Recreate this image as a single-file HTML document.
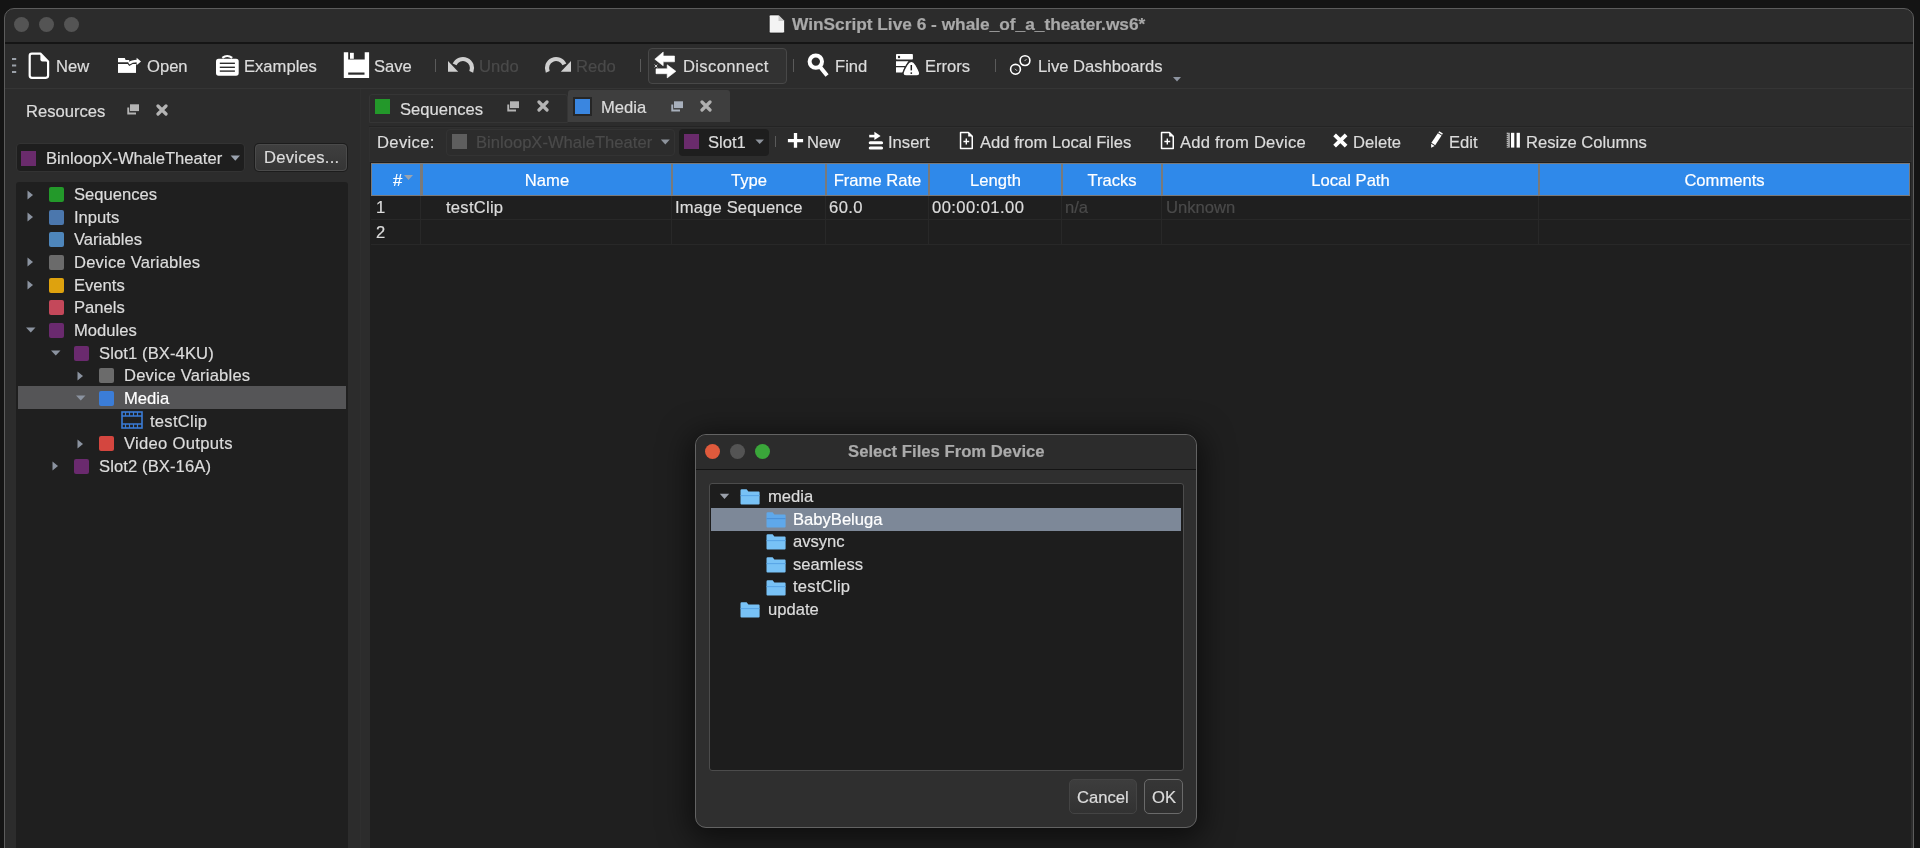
<!DOCTYPE html>
<html><head><meta charset="utf-8">
<style>
*{margin:0;padding:0;box-sizing:border-box}
html,body{width:1920px;height:848px;overflow:hidden;background:#141414;font-family:"Liberation Sans",sans-serif;font-size:16.6px;color:#dcdcdc}
.a{position:absolute}
.t{position:absolute;white-space:nowrap;line-height:20px;will-change:transform;-webkit-text-stroke:0.2px currentColor}
#win{left:4px;top:8px;width:1910px;height:900px;border:1px solid #5c5c5c;border-radius:10px;background:#2c2c2c;overflow:hidden}
.tl{position:absolute;width:15px;height:15px;border-radius:50%;background:#545454}
.sep{position:absolute;width:1px;background:#5a5a5a}
.dim{color:#4a4a4a}
.sq{position:absolute;width:15px;height:15px}
.hdr{position:absolute;top:164px;height:31px;background:#2f8ae9}
.hs{position:absolute;top:164px;width:2px;height:31px;background:#8a8a8a}
.ht{position:absolute;top:170px;line-height:20px;color:#fff;white-space:nowrap;text-align:center}
.vg{position:absolute;width:1px;background:#2a2a2a}
</style></head><body>
<div id="win" class="a"></div>
<!-- title bar -->
<div class="a" style="left:5px;top:42px;width:1908px;height:2px;background:#151515"></div>
<div class="tl" style="left:14px;top:17px"></div>
<div class="tl" style="left:39px;top:17px"></div>
<div class="tl" style="left:64px;top:17px"></div>
<svg class="a" style="left:768px;top:14px" width="18" height="20"><path d="M2.6 1H10.5L16.5 7V17.6Q16.5 18.9 15.2 18.9H2.6Q1.3 18.9 1.3 17.6V2.3Q1.3 1 2.6 1Z" fill="#f3f3f3" stroke="#141414" stroke-width="0.6"/><path d="M10.5 1V7H16.5Z" fill="#c9c9c9"/></svg>
<div class="t" style="left:792px;top:14px;font-weight:bold;font-size:17.3px;color:#a9a9a9">WinScript Live 6 - whale_of_a_theater.ws6*</div>

<!-- toolbar -->
<div class="a" style="left:5px;top:88px;width:1908px;height:1px;background:#353535"></div>
<div class="t" style="left:56px;top:57px">New</div>
<div class="t" style="left:147px;top:57px">Open</div>
<div class="t" style="left:244px;top:57px">Examples</div>
<div class="t" style="left:374px;top:57px">Save</div>
<div class="sep" style="left:435px;top:59px;height:13px"></div>
<div class="t dim" style="left:479px;top:57px">Undo</div>
<div class="t dim" style="left:576px;top:57px">Redo</div>
<div class="sep" style="left:640px;top:59px;height:13px"></div>
<div class="a" style="left:648px;top:48px;width:139px;height:36px;border:1px solid #484848;border-radius:4px;background:#323232"></div>
<div class="t" style="left:683px;top:57px;letter-spacing:0.35px">Disconnect</div>
<div class="sep" style="left:793px;top:59px;height:13px"></div>
<div class="t" style="left:835px;top:57px">Find</div>
<div class="t" style="left:925px;top:57px">Errors</div>
<div class="sep" style="left:995px;top:59px;height:13px"></div>
<div class="t" style="left:1038px;top:57px">Live Dashboards</div>

<!-- toolbar icons -->
<svg class="a" style="left:11px;top:57px" width="6" height="17"><rect x="1" y="1" width="4.2" height="2" fill="#9aa0a8"/><rect x="1" y="7.5" width="4.2" height="2" fill="#9aa0a8"/><rect x="1" y="14" width="4.2" height="2" fill="#9aa0a8"/></svg>
<svg class="a" style="left:28px;top:52px" width="22" height="27"><path d="M3.9 1.6H12.4L20.1 9.4V23.6Q20.1 25.8 17.9 25.8H3.9Q1.7 25.8 1.7 23.6V3.8Q1.7 1.6 3.9 1.6Z" fill="none" stroke="#fff" stroke-width="2.2" stroke-linejoin="round"/><path d="M12.4 1.6V7.6Q12.4 9.6 14.4 9.6H20.1Z" fill="#fff"/></svg>
<svg class="a" style="left:112px;top:48px" width="34" height="34"><path d="M6 10H12.8L13.6 12H17.2V14.2H6Z" fill="#fff"/><rect x="6" y="16" width="18" height="8.9" fill="#fff"/><path d="M16.2 16.6Q19.6 13.8 25.2 13.8" fill="none" stroke="#2c2c2c" stroke-width="3.4"/><path d="M16.8 15.4Q19.8 13 25.2 13" fill="none" stroke="#fff" stroke-width="2.5"/><path d="M24.6 9.8L29 13.5L24.6 17.2Z" fill="#fff"/></svg>
<svg class="a" style="left:210px;top:48px" width="34" height="34"><path d="M12.3 9.8Q17.2 6.2 22.2 9.8" fill="none" stroke="#fff" stroke-width="2.2"/><rect x="6" y="10.8" width="22.7" height="16.9" rx="2.6" fill="#fff"/><rect x="9.8" y="14.6" width="15.1" height="1.4" fill="#2c2c2c"/><rect x="9.8" y="18.6" width="15.1" height="1.4" fill="#2c2c2c"/><rect x="9.8" y="22.4" width="15.1" height="1.4" fill="#2c2c2c"/></svg>
<svg class="a" style="left:338px;top:48px" width="34" height="34"><path d="M5.8 4.2H10.2V11.6H26.7V4.2H31.1V29.9H5.8Z" fill="#fff"/><rect x="12" y="4.8" width="3.8" height="6" fill="#fff"/><rect x="10.2" y="24.5" width="16.3" height="2.2" fill="#2c2c2c"/></svg>
<svg class="a" style="left:444px;top:50px" width="34" height="30"><path d="M10.6 14.45A9.1 9.1 0 0 1 27.25 21.8" fill="none" stroke="#cfcfcf" stroke-width="4.2"/><path d="M4 11.1V21.8H14.2Z" fill="#cfcfcf"/></svg>
<svg class="a" style="left:541px;top:50px" width="34" height="30"><g transform="translate(34 0) scale(-1 1)"><path d="M10.6 14.45A9.1 9.1 0 0 1 27.25 21.8" fill="none" stroke="#cfcfcf" stroke-width="4.2"/><path d="M4 11.1V21.8H14.2Z" fill="#cfcfcf"/></g></svg>
<svg class="a" style="left:650px;top:48px" width="34" height="34"><path d="M4.8 11.2L13.2 4V8H24.5V13.8H13.2V17.8Z" fill="#fff" stroke="#fff" stroke-width="0.6" stroke-linejoin="round"/><path d="M25.9 23.3L17.2 16.8V20.8H6V25.7H17.2V29.9Z" fill="#fff" stroke="#fff" stroke-width="0.6" stroke-linejoin="round"/><path d="M4.6 16.6L7.4 19.4M7.4 16.6L4.6 19.4" stroke="#ddd" stroke-width="0.9"/></svg>
<svg class="a" style="left:802px;top:48px" width="34" height="34"><circle cx="13.8" cy="13.6" r="6.2" fill="none" stroke="#fff" stroke-width="4"/><path d="M18.6 19.6L23.8 26" stroke="#fff" stroke-width="4" stroke-linecap="square"/></svg>
<svg class="a" style="left:890px;top:48px" width="34" height="34"><rect x="6" y="6" width="16.9" height="5.6" rx="0.8" fill="#fff"/><circle cx="9" cy="9" r="1.2" fill="#2c2c2c"/><path d="M6 13.2H18.5L15.6 18H6Z" fill="#fff"/><path d="M6 19.2H14.6L12.5 24.5H6Z" fill="#fff"/><path d="M21.4 13.2C23.4 13.2 24.6 14.6 26 17C28.2 20.8 29.8 23.6 29.8 25.4C29.8 27.2 28.4 28 26.4 28H16.4C14.4 28 13 27.2 13 25.4C13 23.6 14.6 20.8 16.8 17C18.2 14.6 19.4 13.2 21.4 13.2Z" fill="#fff" stroke="#2c2c2c" stroke-width="1.4"/><path d="M21.3 17V22.4" stroke="#1a1a1a" stroke-width="1.5"/><circle cx="21.3" cy="25.1" r="0.9" fill="#1a1a1a"/></svg>
<svg class="a" style="left:1004px;top:50px" width="32" height="30"><circle cx="11.5" cy="19.3" r="4.9" fill="none" stroke="#fff" stroke-width="1.6"/><circle cx="21" cy="10.6" r="4.9" fill="none" stroke="#fff" stroke-width="1.6"/><path d="M11 18.8L13 20.8M20.5 11.1L22.5 9.1" stroke="#cfcfcf" stroke-width="1"/></svg>
<svg class="a" style="left:1173px;top:77px" width="9" height="5"><path d="M0 0H8L4 4.5Z" fill="#8d94a0"/></svg>

<!-- dock -->
<div class="t" style="left:26px;top:102px">Resources</div>
<svg class="a" style="left:127px;top:104px" width="13" height="11"><rect x="3" y="0.3" width="9" height="6.8" fill="#b4b4b4"/><path d="M0.3 3.5H2.2V8.6H9V10.6H0.3Z" fill="#b4b4b4"/></svg>
<svg class="a" style="left:156px;top:104px" width="12" height="12"><path d="M2 2L10 10M10 2L2 10" stroke="#b4b4b4" stroke-width="3.2" stroke-linecap="round"/></svg>
<div class="a" style="left:16px;top:143px;width:229px;height:29px;border-radius:4px;background:#1e1e1e;border:1px solid #333"></div>
<div class="sq" style="left:21px;top:151px;background:#6a2b6c"></div>
<div class="t" style="left:46px;top:149px">BinloopX-WhaleTheater</div>
<svg class="a" style="left:225px;top:155px" width="16" height="7"><path d="M5.6 0.6H15L10.3 5.8Z" fill="#9aa2ae"/></svg>
<div class="a" style="left:255px;top:144px;width:92px;height:27px;border-radius:4px;background:linear-gradient(#3f3f3f,#353535);border:1px solid #4a4a4a;box-shadow:0 0 0 1px #1c1c1c"></div>
<div class="t" style="left:264px;top:148px;letter-spacing:0.25px">Devices...</div>
<div class="a" style="left:16px;top:182px;width:332px;height:700px;background:#1f1f1f;border-radius:3px"></div>
<svg class="a" style="left:27px;top:190px" width="7" height="10"><path d="M0.5 0.5L6 5L0.5 9.5Z" fill="#8b93a0"/></svg>
<div class="sq" style="left:49px;top:187px;background:#23992a;border-radius:2px"></div>
<div class="t" style="left:74px;top:185px">Sequences</div>
<svg class="a" style="left:27px;top:212px" width="7" height="10"><path d="M0.5 0.5L6 5L0.5 9.5Z" fill="#8b93a0"/></svg>
<div class="sq" style="left:49px;top:210px;background:#4b77ad;border-radius:2px"></div>
<div class="t" style="left:74px;top:208px">Inputs</div>
<div class="sq" style="left:49px;top:232px;background:#4e86bb;border-radius:2px"></div>
<div class="t" style="left:74px;top:230px">Variables</div>
<svg class="a" style="left:27px;top:257px" width="7" height="10"><path d="M0.5 0.5L6 5L0.5 9.5Z" fill="#8b93a0"/></svg>
<div class="sq" style="left:49px;top:255px;background:#6b6b6b;border-radius:2px"></div>
<div class="t" style="left:74px;top:253px;letter-spacing:0.19px">Device Variables</div>
<svg class="a" style="left:27px;top:280px" width="7" height="10"><path d="M0.5 0.5L6 5L0.5 9.5Z" fill="#8b93a0"/></svg>
<div class="sq" style="left:49px;top:278px;background:#dea20e;border-radius:2px"></div>
<div class="t" style="left:74px;top:276px">Events</div>
<div class="sq" style="left:49px;top:300px;background:#c4485a;border-radius:2px"></div>
<div class="t" style="left:74px;top:298px">Panels</div>
<svg class="a" style="left:26px;top:327px" width="10" height="6"><path d="M0 0.5L9.5 0.5L4.75 5.5Z" fill="#8b93a0"/></svg>
<div class="sq" style="left:49px;top:323px;background:#6a2a6e;border-radius:2px"></div>
<div class="t" style="left:74px;top:321px">Modules</div>
<svg class="a" style="left:51px;top:350px" width="10" height="6"><path d="M0 0.5L9.5 0.5L4.75 5.5Z" fill="#8b93a0"/></svg>
<div class="sq" style="left:74px;top:346px;background:#6a2a6e;border-radius:2px"></div>
<div class="t" style="left:99px;top:344px;letter-spacing:0.1px">Slot1 (BX-4KU)</div>
<svg class="a" style="left:77px;top:371px" width="7" height="10"><path d="M0.5 0.5L6 5L0.5 9.5Z" fill="#8b93a0"/></svg>
<div class="sq" style="left:99px;top:368px;background:#6b6b6b;border-radius:2px"></div>
<div class="t" style="left:124px;top:366px;letter-spacing:0.19px">Device Variables</div>
<div class="a" style="left:18px;top:386px;width:328px;height:23px;background:#555557"></div>
<svg class="a" style="left:76px;top:395px" width="10" height="6"><path d="M0 0.5L9.5 0.5L4.75 5.5Z" fill="#8b93a0"/></svg>
<div class="sq" style="left:99px;top:391px;background:#3b7dd8;border-radius:2px"></div>
<div class="t" style="left:124px;top:389px;color:#fff">Media</div>
<svg class="a" style="left:121px;top:411px" width="22" height="18"><rect x="1" y="1" width="20" height="16" fill="none" stroke="#3a7bd5" stroke-width="1.6"/><path d="M1 5H21M1 13H21" stroke="#3a7bd5" stroke-width="1.4"/><path d="M4.5 1V5M8.5 1V5M12.5 1V5M16.5 1V5M4.5 13V17M8.5 13V17M12.5 13V17M16.5 13V17" stroke="#3a7bd5" stroke-width="1.2"/></svg>
<div class="t" style="left:150px;top:412px;letter-spacing:0.25px">testClip</div>
<svg class="a" style="left:77px;top:439px" width="7" height="10"><path d="M0.5 0.5L6 5L0.5 9.5Z" fill="#8b93a0"/></svg>
<div class="sq" style="left:99px;top:436px;background:#d4463f;border-radius:2px"></div>
<div class="t" style="left:124px;top:434px;letter-spacing:0.3px">Video Outputs</div>
<svg class="a" style="left:52px;top:461px" width="7" height="10"><path d="M0.5 0.5L6 5L0.5 9.5Z" fill="#8b93a0"/></svg>
<div class="sq" style="left:74px;top:459px;background:#6a2a6e;border-radius:2px"></div>
<div class="t" style="left:99px;top:457px;letter-spacing:0.1px">Slot2 (BX-16A)</div>

<div class="a" style="left:360px;top:89px;width:1px;height:760px;background:#2f2f2f"></div>
<!-- tabs -->
<div class="a" style="left:369px;top:94px;width:199px;height:29px;border:1px solid #353535;border-radius:3px 3px 0 0"></div>
<div class="sq" style="left:375px;top:99px;background:#23982a"></div>
<div class="t" style="left:400px;top:100px">Sequences</div>
<svg class="a" style="left:507px;top:101px" width="13" height="11"><rect x="3" y="0.3" width="9" height="6.8" fill="#b4b4b4"/><path d="M0.3 3.5H2.2V8.6H9V10.6H0.3Z" fill="#b4b4b4"/></svg>
<svg class="a" style="left:537px;top:100px" width="12" height="12"><path d="M2 2L10 10M10 2L2 10" stroke="#b4b4b4" stroke-width="3.2" stroke-linecap="round"/></svg>
<div class="a" style="left:568px;top:90px;width:162px;height:32px;background:#3e3e3e;border-radius:3px 3px 0 0"></div>
<div class="a" style="left:573px;top:97px;width:19px;height:19px;background:#262626"></div>
<div class="sq" style="left:575px;top:99px;background:#3a86e0"></div>
<div class="t" style="left:601px;top:98px">Media</div>
<svg class="a" style="left:671px;top:101px" width="13" height="11"><rect x="3" y="0.3" width="9" height="6.8" fill="#a8b0bc"/><path d="M0.3 3.5H2.2V8.6H9V10.6H0.3Z" fill="#a8b0bc"/></svg>
<svg class="a" style="left:700px;top:100px" width="12" height="12"><path d="M2 2L10 10M10 2L2 10" stroke="#b0b0b0" stroke-width="3.2" stroke-linecap="round"/></svg>
<div class="a" style="left:5px;top:126px;width:1908px;height:1px;background:#242424;clip-path:inset(0 0 0 364px)"></div>
<!-- device toolbar -->
<div class="a" style="left:369px;top:127px;width:1543px;height:35px;border:1px solid #303030;background:#2c2c2c"></div>
<div class="t" style="left:377px;top:133px;letter-spacing:0.35px">Device:</div>
<div class="a" style="left:446px;top:129px;width:229px;height:27px;border-radius:4px;border:1px solid #333"></div>
<div class="sq" style="left:452px;top:134px;background:#5e5e5e"></div>
<div class="t dim" style="left:476px;top:133px">BinloopX-WhaleTheater</div>
<div class="a" style="left:679px;top:129px;width:90px;height:27px;border-radius:4px;background:#1e1e1e"></div>
<div class="sq" style="left:684px;top:134px;background:#6a2b6c"></div>
<div class="t" style="left:708px;top:133px">Slot1</div>
<div class="sep" style="left:775px;top:136px;height:11px"></div>
<div class="t" style="left:807px;top:133px">New</div>
<div class="t" style="left:888px;top:133px">Insert</div>
<div class="t" style="left:980px;top:133px">Add from Local Files</div>
<div class="t" style="left:1180px;top:133px;letter-spacing:0.22px">Add from Device</div>
<div class="t" style="left:1353px;top:133px">Delete</div>
<div class="t" style="left:1449px;top:133px">Edit</div>
<div class="t" style="left:1526px;top:133px">Resize Columns</div>

<svg class="a" style="left:660px;top:139px" width="11" height="6"><path d="M0.8 0.6H9.8L5.3 5.4Z" fill="#8d939c"/></svg>
<svg class="a" style="left:755px;top:139px" width="10" height="6"><path d="M0.4 0.4H9L4.7 5Z" fill="#8d939c"/></svg>
<svg class="a" style="left:782px;top:128px" width="24" height="24"><path d="M5.9 12.55H21.1M13.5 5V19.7" stroke="#fff" stroke-width="3.3"/></svg>
<svg class="a" style="left:866px;top:128px" width="20" height="24"><path d="M3.2 9.4H9.8V6.8H3.2Z" fill="#fff"/><path d="M8.4 3.7L14.6 7.9L8.4 12.1Z" fill="#fff"/><path d="M4.3 14.75H15.5M4.3 20H15.5" stroke="#fff" stroke-width="3.2" stroke-linecap="round"/></svg>
<svg class="a" style="left:954px;top:128px" width="26" height="26"><path d="M6.55 4.55H14.4L18.25 8.4V20.45H6.55Z" fill="none" stroke="#fff" stroke-width="1.5" stroke-linejoin="round"/><path d="M14.2 4.6L18.2 8.6H14.2Z" fill="#fff"/><path d="M12.3 10.6V16.4M9.4 13.5H15.2" stroke="#fff" stroke-width="1.4"/></svg>
<svg class="a" style="left:1155px;top:128px" width="26" height="26"><path d="M6.55 4.55H14.4L18.25 8.4V20.45H6.55Z" fill="none" stroke="#fff" stroke-width="1.5" stroke-linejoin="round"/><path d="M14.2 4.6L18.2 8.6H14.2Z" fill="#fff"/><path d="M12.3 10.6V16.4M9.4 13.5H15.2" stroke="#fff" stroke-width="1.4"/></svg>
<svg class="a" style="left:1326px;top:128px" width="26" height="26"><path d="M8.6 6.9L20.1 18.1M20.1 6.9L8.6 18.1" stroke="#fff" stroke-width="3.9"/></svg>
<svg class="a" style="left:1426px;top:128px" width="20" height="24"><path d="M11.8 5.2L15.6 7.6L9.2 17.2L5.4 14.8Z" fill="#fff"/><path d="M12.4 4.4L13.2 3.2L16.9 5.6L16.1 6.8Z" fill="#fff"/><path d="M5.1 15.8L8.6 18L5.2 19.8Z" fill="#fff"/></svg>
<svg class="a" style="left:1504px;top:128px" width="20" height="24"><path d="M3.5 4.8V19.6" stroke="#e6e6e6" stroke-width="1.6" stroke-dasharray="1 1"/><path d="M5 4.8V19.6" stroke="#fff" stroke-width="1"/><rect x="7" y="4.8" width="3.3" height="14.8" fill="#fff"/><rect x="12.6" y="4.8" width="3.3" height="14.8" fill="#fff"/></svg>
<!-- table -->
<div class="a" style="left:370px;top:162px;width:1541px;height:700px;background:#1f1f1f"></div>
<div class="a" style="left:371px;top:163px;width:1539px;height:33px;background:#7a7a7a"></div>
<div class="a" style="left:372px;top:164px;width:48px;height:31px;background:#2f89ea"></div>
<div class="t" style="left:393px;top:171px;color:#fff">#</div>
<svg class="a" style="left:404px;top:175px" width="9" height="5"><path d="M0 0H9L4.5 5Z" fill="#9aa4b0"/></svg>
<div class="a" style="left:423px;top:164px;width:248px;height:31px;background:#2f89ea"></div>
<div class="t" style="left:423px;top:171px;width:248px;text-align:center;color:#fff">Name</div>
<div class="a" style="left:673px;top:164px;width:152px;height:31px;background:#2f89ea"></div>
<div class="t" style="left:673px;top:171px;width:152px;text-align:center;color:#fff">Type</div>
<div class="a" style="left:827px;top:164px;width:101px;height:31px;background:#2f89ea"></div>
<div class="t" style="left:827px;top:171px;width:101px;text-align:center;color:#fff">Frame Rate</div>
<div class="a" style="left:930px;top:164px;width:131px;height:31px;background:#2f89ea"></div>
<div class="t" style="left:930px;top:171px;width:131px;text-align:center;color:#fff">Length</div>
<div class="a" style="left:1063px;top:164px;width:98px;height:31px;background:#2f89ea"></div>
<div class="t" style="left:1063px;top:171px;width:98px;text-align:center;color:#fff">Tracks</div>
<div class="a" style="left:1163px;top:164px;width:375px;height:31px;background:#2f89ea"></div>
<div class="t" style="left:1163px;top:171px;width:375px;text-align:center;color:#fff">Local Path</div>
<div class="a" style="left:1540px;top:164px;width:369px;height:31px;background:#2f89ea"></div>
<div class="t" style="left:1540px;top:171px;width:369px;text-align:center;color:#fff">Comments</div>
<div class="a" style="left:371px;top:219px;width:1539px;height:1px;background:#282828"></div>
<div class="a" style="left:371px;top:244px;width:1539px;height:1px;background:#282828"></div>
<div class="a" style="left:420px;top:196px;width:1px;height:48px;background:#282828"></div>
<div class="a" style="left:671px;top:196px;width:1px;height:48px;background:#282828"></div>
<div class="a" style="left:825px;top:196px;width:1px;height:48px;background:#282828"></div>
<div class="a" style="left:928px;top:196px;width:1px;height:48px;background:#282828"></div>
<div class="a" style="left:1061px;top:196px;width:1px;height:48px;background:#282828"></div>
<div class="a" style="left:1161px;top:196px;width:1px;height:48px;background:#282828"></div>
<div class="a" style="left:1538px;top:196px;width:1px;height:48px;background:#282828"></div>
<div class="t" style="left:376px;top:198px">1</div>
<div class="t" style="left:446px;top:198px;letter-spacing:0.25px">testClip</div>
<div class="t" style="left:675px;top:198px;letter-spacing:0.15px">Image Sequence</div>
<div class="t" style="left:829px;top:198px;letter-spacing:0.4px">60.0</div>
<div class="t" style="left:932px;top:198px;letter-spacing:0.42px">00:00:01.00</div>
<div class="t dim" style="left:1065px;top:198px">n/a</div>
<div class="t dim" style="left:1166px;top:198px">Unknown</div>
<div class="t" style="left:376px;top:223px">2</div>

<!-- dialog -->
<div class="a" style="left:695px;top:434px;width:502px;height:394px;border-radius:11px;background:#2f2f2f;border:1px solid #636363;box-shadow:0 6px 30px 6px rgba(0,0,0,.55)"></div>
<div class="a" style="left:696px;top:435px;width:500px;height:34px;border-radius:10px 10px 0 0;background:#2c2c2c"></div>
<div class="a" style="left:696px;top:469px;width:500px;height:1px;background:#141414"></div>
<div class="tl" style="left:705px;top:444px;background:#df5a3c"></div>
<div class="tl" style="left:730px;top:444px;background:#545454"></div>
<div class="tl" style="left:755px;top:444px;background:#3aa63a"></div>
<div class="t" style="left:848px;top:442px;font-weight:bold;font-size:16.7px;color:#ababab">Select Files From Device</div>
<div class="a" style="left:709px;top:483px;width:475px;height:288px;border:1px solid #4c4c4c;border-radius:3px;background:#1d1d1d"></div>
<div class="a" style="left:711px;top:508px;width:470px;height:23px;background:#7d8898"></div>
<svg class="a" style="left:719px;top:493px" width="11" height="7"><path d="M0.8 0.8H10.2L5.5 6Z" fill="#9aa0aa"/></svg>
<svg class="a" style="left:740px;top:489px" width="20" height="16"><path d="M0.5 1.5Q0.5 0.3 1.7 0.3H6.6L8.4 2.4H18.6Q19.6 2.4 19.6 3.4V14.6Q19.6 15.6 18.6 15.6H1.5Q0.5 15.6 0.5 14.6Z" fill="#78c2f6"/><path d="M0.5 6.6H19.6" stroke="#5aa6e6" stroke-width="1.1"/></svg>
<div class="t" style="left:768px;top:487px">media</div>
<svg class="a" style="left:766px;top:512px" width="20" height="16"><path d="M0.5 1.5Q0.5 0.3 1.7 0.3H6.6L8.4 2.4H18.6Q19.6 2.4 19.6 3.4V14.6Q19.6 15.6 18.6 15.6H1.5Q0.5 15.6 0.5 14.6Z" fill="#5fa8ea"/><path d="M0.5 6.6H19.6" stroke="#4a90d8" stroke-width="1.1"/></svg>
<div class="t" style="left:793px;top:510px;color:#fff">BabyBeluga</div>
<svg class="a" style="left:766px;top:534px" width="20" height="16"><path d="M0.5 1.5Q0.5 0.3 1.7 0.3H6.6L8.4 2.4H18.6Q19.6 2.4 19.6 3.4V14.6Q19.6 15.6 18.6 15.6H1.5Q0.5 15.6 0.5 14.6Z" fill="#78c2f6"/><path d="M0.5 6.6H19.6" stroke="#5aa6e6" stroke-width="1.1"/></svg>
<div class="t" style="left:793px;top:532px">avsync</div>
<svg class="a" style="left:766px;top:557px" width="20" height="16"><path d="M0.5 1.5Q0.5 0.3 1.7 0.3H6.6L8.4 2.4H18.6Q19.6 2.4 19.6 3.4V14.6Q19.6 15.6 18.6 15.6H1.5Q0.5 15.6 0.5 14.6Z" fill="#78c2f6"/><path d="M0.5 6.6H19.6" stroke="#5aa6e6" stroke-width="1.1"/></svg>
<div class="t" style="left:793px;top:555px">seamless</div>
<svg class="a" style="left:766px;top:580px" width="20" height="16"><path d="M0.5 1.5Q0.5 0.3 1.7 0.3H6.6L8.4 2.4H18.6Q19.6 2.4 19.6 3.4V14.6Q19.6 15.6 18.6 15.6H1.5Q0.5 15.6 0.5 14.6Z" fill="#78c2f6"/><path d="M0.5 6.6H19.6" stroke="#5aa6e6" stroke-width="1.1"/></svg>
<div class="t" style="left:793px;top:577px;letter-spacing:0.25px">testClip</div>
<svg class="a" style="left:740px;top:602px" width="20" height="16"><path d="M0.5 1.5Q0.5 0.3 1.7 0.3H6.6L8.4 2.4H18.6Q19.6 2.4 19.6 3.4V14.6Q19.6 15.6 18.6 15.6H1.5Q0.5 15.6 0.5 14.6Z" fill="#78c2f6"/><path d="M0.5 6.6H19.6" stroke="#5aa6e6" stroke-width="1.1"/></svg>
<div class="t" style="left:768px;top:600px">update</div>
<div class="a" style="left:1069px;top:779px;width:68px;height:35px;border:1px solid #444;border-radius:5px;background:linear-gradient(#3d3d3d,#323232)"></div>
<div class="t" style="left:1077px;top:788px">Cancel</div>
<div class="a" style="left:1144px;top:779px;width:39px;height:35px;border:1px solid #6a6a6a;border-radius:5px;background:linear-gradient(#363636,#2f2f2f)"></div>
<div class="t" style="left:1152px;top:788px">OK</div>
</body></html>
